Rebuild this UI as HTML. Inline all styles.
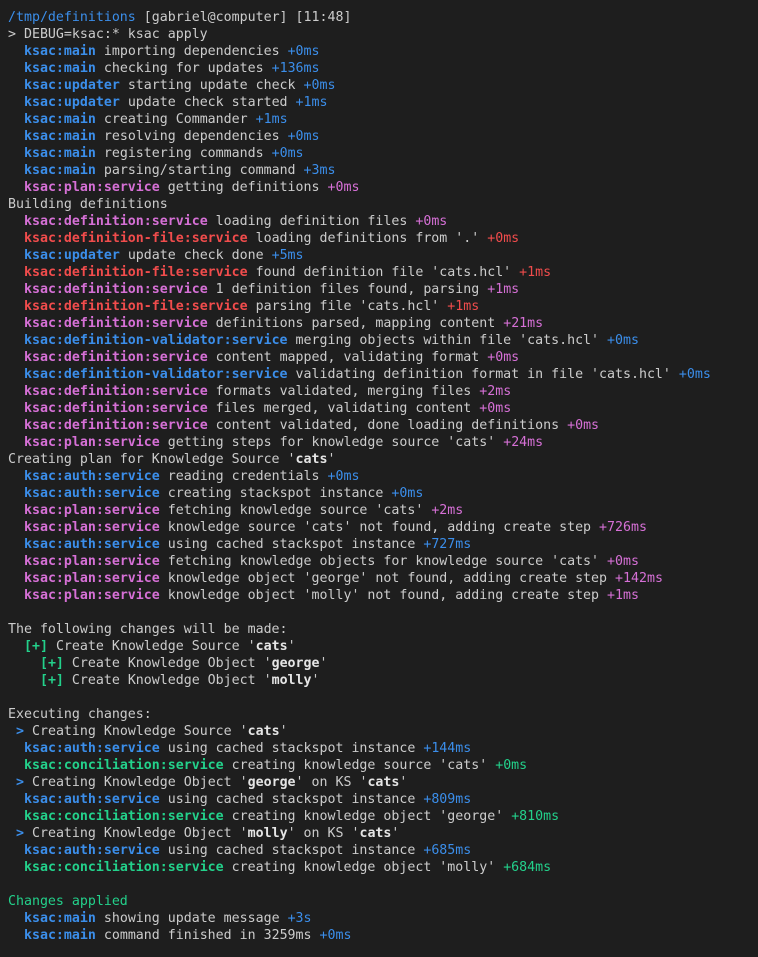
<!DOCTYPE html><html><head><style>
html,body{margin:0;background:#1e1e1e;width:758px;height:957px;overflow:hidden}
pre{margin:0;padding:9px 0 0 8px;font-family:"DejaVu Sans Mono","Liberation Mono",monospace;font-size:13.28px;line-height:17px;color:#cccccc;white-space:pre}
.b{color:#3b8eea;font-weight:bold}.m{color:#d670d6;font-weight:bold}.r{color:#f14c4c;font-weight:bold}.g{color:#23d18b;font-weight:bold}
.bt{color:#3b8eea}.mt{color:#d670d6}.rt{color:#f14c4c}.gt{color:#23d18b}.p{color:#3b8eea}
.w{font-weight:bold;color:#e5e5e5}
</style></head><body><pre><span class="p">/tmp/definitions</span> [gabriel@computer] [11:48]
&gt; DEBUG=ksac:* ksac apply
  <span class="b">ksac:main</span> importing dependencies <span class="bt">+0ms</span>
  <span class="b">ksac:main</span> checking for updates <span class="bt">+136ms</span>
  <span class="b">ksac:updater</span> starting update check <span class="bt">+0ms</span>
  <span class="b">ksac:updater</span> update check started <span class="bt">+1ms</span>
  <span class="b">ksac:main</span> creating Commander <span class="bt">+1ms</span>
  <span class="b">ksac:main</span> resolving dependencies <span class="bt">+0ms</span>
  <span class="b">ksac:main</span> registering commands <span class="bt">+0ms</span>
  <span class="b">ksac:main</span> parsing/starting command <span class="bt">+3ms</span>
  <span class="m">ksac:plan:service</span> getting definitions <span class="mt">+0ms</span>
Building definitions
  <span class="m">ksac:definition:service</span> loading definition files <span class="mt">+0ms</span>
  <span class="r">ksac:definition-file:service</span> loading definitions from '.' <span class="rt">+0ms</span>
  <span class="b">ksac:updater</span> update check done <span class="bt">+5ms</span>
  <span class="r">ksac:definition-file:service</span> found definition file 'cats.hcl' <span class="rt">+1ms</span>
  <span class="m">ksac:definition:service</span> 1 definition files found, parsing <span class="mt">+1ms</span>
  <span class="r">ksac:definition-file:service</span> parsing file 'cats.hcl' <span class="rt">+1ms</span>
  <span class="m">ksac:definition:service</span> definitions parsed, mapping content <span class="mt">+21ms</span>
  <span class="b">ksac:definition-validator:service</span> merging objects within file 'cats.hcl' <span class="bt">+0ms</span>
  <span class="m">ksac:definition:service</span> content mapped, validating format <span class="mt">+0ms</span>
  <span class="b">ksac:definition-validator:service</span> validating definition format in file 'cats.hcl' <span class="bt">+0ms</span>
  <span class="m">ksac:definition:service</span> formats validated, merging files <span class="mt">+2ms</span>
  <span class="m">ksac:definition:service</span> files merged, validating content <span class="mt">+0ms</span>
  <span class="m">ksac:definition:service</span> content validated, done loading definitions <span class="mt">+0ms</span>
  <span class="m">ksac:plan:service</span> getting steps for knowledge source 'cats' <span class="mt">+24ms</span>
Creating plan for Knowledge Source '<span class="w">cats</span>'
  <span class="b">ksac:auth:service</span> reading credentials <span class="bt">+0ms</span>
  <span class="b">ksac:auth:service</span> creating stackspot instance <span class="bt">+0ms</span>
  <span class="m">ksac:plan:service</span> fetching knowledge source 'cats' <span class="mt">+2ms</span>
  <span class="m">ksac:plan:service</span> knowledge source 'cats' not found, adding create step <span class="mt">+726ms</span>
  <span class="b">ksac:auth:service</span> using cached stackspot instance <span class="bt">+727ms</span>
  <span class="m">ksac:plan:service</span> fetching knowledge objects for knowledge source 'cats' <span class="mt">+0ms</span>
  <span class="m">ksac:plan:service</span> knowledge object 'george' not found, adding create step <span class="mt">+142ms</span>
  <span class="m">ksac:plan:service</span> knowledge object 'molly' not found, adding create step <span class="mt">+1ms</span>

The following changes will be made:
  <span class="g">[+]</span> Create Knowledge Source '<span class="w">cats</span>'
    <span class="g">[+]</span> Create Knowledge Object '<span class="w">george</span>'
    <span class="g">[+]</span> Create Knowledge Object '<span class="w">molly</span>'

Executing changes:
 <span class="b">&gt;</span> Creating Knowledge Source '<span class="w">cats</span>'
  <span class="b">ksac:auth:service</span> using cached stackspot instance <span class="bt">+144ms</span>
  <span class="g">ksac:conciliation:service</span> creating knowledge source 'cats' <span class="gt">+0ms</span>
 <span class="b">&gt;</span> Creating Knowledge Object '<span class="w">george</span>' on KS '<span class="w">cats</span>'
  <span class="b">ksac:auth:service</span> using cached stackspot instance <span class="bt">+809ms</span>
  <span class="g">ksac:conciliation:service</span> creating knowledge object 'george' <span class="gt">+810ms</span>
 <span class="b">&gt;</span> Creating Knowledge Object '<span class="w">molly</span>' on KS '<span class="w">cats</span>'
  <span class="b">ksac:auth:service</span> using cached stackspot instance <span class="bt">+685ms</span>
  <span class="g">ksac:conciliation:service</span> creating knowledge object 'molly' <span class="gt">+684ms</span>

<span class="gt">Changes applied</span>
  <span class="b">ksac:main</span> showing update message <span class="bt">+3s</span>
  <span class="b">ksac:main</span> command finished in 3259ms <span class="bt">+0ms</span>
</pre></body></html>
